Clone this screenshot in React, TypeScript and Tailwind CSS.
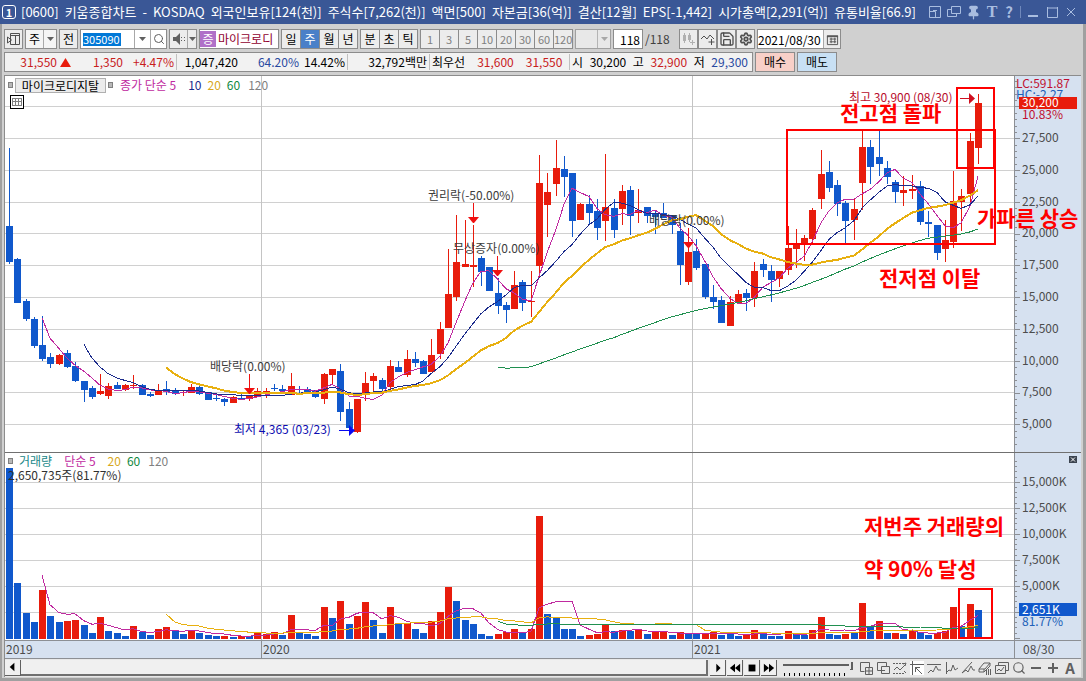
import React, { ReactNode } from 'react';
import { Search, Settings, Save, Pin } from 'lucide-react';

const RED = '#e81c0c';
const BLUE = '#1058cc';

// [up, high, body top, body bottom, low]
type Candle = [number, number, number, number, number];

const candles: Candle[] = [
  [0, 148, 226, 262, 264], [0, 258, 259, 303, 303], [0, 299, 301, 319, 321], [0, 317, 319, 346, 348],
  [0, 316, 345, 359, 361], [0, 353, 357, 364, 368], [1, 354, 355, 364, 365], [0, 350, 353, 367, 368],
  [0, 362, 366, 381, 382], [0, 381, 381, 390, 402], [0, 386, 388, 397, 399], [1, 374, 391, 394, 395],
  [1, 383, 386, 396, 399], [0, 382, 385, 389, 389], [1, 384, 385, 390, 391], [1, 375, 385, 386, 389],
  [0, 384, 385, 395, 395], [0, 392, 394, 396, 397], [1, 384, 390, 395, 395], [0, 381, 389, 392, 395],
  [0, 388, 390, 394, 395], [1, 391, 392, 393, 396], [1, 384, 387, 393, 393], [0, 385, 387, 394, 395],
  [0, 392, 392, 400, 400], [0, 395, 398, 399, 401], [0, 398, 399, 402, 406], [1, 396, 397, 403, 403],
  [0, 393, 398, 399, 399], [1, 395, 396, 399, 401], [1, 388, 391, 397, 397], [1, 388, 391, 392, 398],
  [0, 384, 388, 389, 391], [0, 385, 389, 391, 393], [1, 373, 386, 395, 395], [0, 386, 389, 390, 393],
  [0, 387, 389, 392, 392], [0, 390, 390, 397, 398], [1, 373, 374, 399, 404], [1, 369, 369, 375, 385],
  [0, 364, 371, 412, 421], [0, 402, 409, 428, 428], [1, 399, 399, 432, 433], [1, 372, 383, 393, 401],
  [1, 373, 376, 381, 392], [0, 378, 380, 389, 392], [1, 360, 366, 387, 391], [0, 361, 367, 372, 372],
  [1, 350, 359, 375, 377], [0, 352, 359, 363, 367], [0, 360, 361, 374, 374], [1, 339, 355, 372, 372],
  [1, 322, 329, 354, 359], [1, 249, 294, 328, 328], [1, 215, 262, 297, 301], [1, 220, 264, 267, 267],
  [1, 225, 265, 267, 287], [0, 256, 258, 272, 286], [0, 267, 267, 291, 291], [0, 278, 293, 306, 314],
  [0, 302, 305, 310, 323], [1, 271, 285, 309, 309], [0, 280, 282, 303, 311], [1, 271, 301, 302, 317],
  [1, 155, 183, 266, 278], [1, 173, 192, 205, 237], [1, 140, 168, 184, 196], [0, 156, 169, 177, 197],
  [0, 173, 173, 221, 237], [1, 203, 204, 220, 220], [0, 195, 204, 213, 224], [0, 199, 211, 228, 240],
  [1, 154, 207, 221, 241], [0, 199, 208, 230, 238], [1, 185, 191, 209, 225], [0, 186, 190, 216, 235],
  [1, 189, 210, 213, 223], [0, 207, 207, 216, 223], [0, 211, 213, 217, 234], [0, 203, 213, 218, 218],
  [0, 215, 215, 225, 234], [0, 223, 231, 265, 285], [1, 248, 252, 282, 285], [0, 239, 251, 268, 270],
  [0, 264, 264, 297, 299], [0, 285, 297, 302, 309], [0, 296, 300, 323, 323], [1, 296, 302, 326, 326],
  [1, 290, 294, 303, 303], [0, 289, 293, 298, 311], [1, 262, 271, 298, 307], [0, 259, 264, 270, 277],
  [0, 265, 271, 280, 302], [1, 271, 271, 279, 287], [1, 226, 248, 270, 275], [1, 229, 244, 249, 268],
  [1, 235, 238, 244, 261], [1, 208, 210, 239, 243], [1, 150, 174, 199, 209], [0, 161, 172, 188, 192],
  [0, 180, 185, 204, 216], [0, 201, 203, 221, 243], [1, 199, 209, 220, 240], [1, 130, 147, 183, 210],
  [0, 140, 147, 167, 184], [0, 130, 157, 164, 176], [0, 161, 168, 177, 184], [0, 180, 182, 192, 203],
  [1, 176, 190, 193, 206], [1, 175, 189, 191, 199], [0, 181, 186, 222, 225], [0, 211, 222, 224, 237],
  [0, 225, 225, 253, 260], [1, 220, 240, 249, 262], [1, 171, 201, 242, 248], [1, 189, 196, 202, 231],
  [1, 133, 141, 194, 203], [1, 94, 103, 148, 164],
];

// bar tops; r = rising volume, b = falling
const volumes =
  'b468 b583 b613 b622 r590 b616 b622 r621 r620 b625 b633 r617 b631 b633 b636 r626 b632 b635 r629 r627 b631 b634 r630 b633 b635 b636 r636 b637 r636 b636 r632 r634 r632 b635 r615 b633 b634 b636 r607 b618 r601 b624 r616 r602 b620 b633 r607 b624 r623 b629 b633 r621 r612 r587 b601 b620 b624 b634 b636 r634 r632 r629 b633 r629 r516 b614 b617 b629 b629 b636 r635 r634 r625 b631 r630 b631 r629 b634 r632 r632 b635 r632 b634 b634 r633 r632 b635 b634 b636 r635 r630 b634 b636 b636 r631 b634 b635 r630 r617 b634 b635 r634 b633 r603 b627 r621 b633 r633 b634 r631 b632 b635 r633 r631 r607 b626 r604 b610'
    .split(' ')
    .map((v) => ({ up: v[0] === 'r', top: Number(v.slice(1)) }));

const xOf = (i: number) => Math.round(9 + i * 8.282);
const closes = candles.map(([up, , top, bottom]) => (up ? top : bottom));
const tops = volumes.map((v) => v.top);

const average = (values: number[], period: number) => {
  const points: string[] = [];
  for (let i = period - 1; i < values.length; i++) {
    const part = values.slice(i - period + 1, i + 1);
    const mean = part.reduce((a, b) => a + b, 0) / period;
    points.push(`${xOf(i)},${mean.toFixed(1)}`);
  }
  return points.join(' ');
};

const priceTicks = ['27,500', '25,000', '22,500', '20,000', '17,500', '15,000', '12,500', '10,000', '7,500', '5,000'];
const volumeTicks = ['15,000K', '12,500K', '10,000K', '7,500K', '5,000K'];

const DownArrow = ({ x, y }: { x: number; y: number }) => (
  <g fill="#f01010" stroke="none">
    <rect x={x} y={y - 20} width="1" height="14" />
    <path d={`M${x - 5} ${y - 6}h11l-5 6h-1z`} />
  </g>
);

const PriceChart = () => (
  <svg viewBox="5 76 1076 376" className="block w-full overflow-visible text-[12px]" role="img" aria-label="주가 차트">
    <rect x="5" y="76" width="1009" height="376" fill="#fff" />
    <rect x="1014" y="76" width="67" height="376" fill="#d6e1f0" />
    <g shapeRendering="crispEdges">
      {[106, ...priceTicks.map((_, i) => Math.round(138 + i * 31.8))].map((y) => (
        <rect key={y} x="5" y={y} width="1009" height="1" fill="#d0d0d0" />
      ))}
      <rect x="261" y="76" width="1" height="376" fill="#c4c4c4" />
      <rect x="692" y="76" width="1" height="376" fill="#c4c4c4" />
      <rect x="1014" y="76" width="1" height="376" fill="#8c8f94" />
      {Array.from({ length: 58 }, (_, i) => (
        <rect key={i} x="1014" y={Math.round(81 + i * 6.36)} width={i % 5 === 4 ? 6 : 3} height="1" fill="#8c8f94" />
      ))}
      {candles.map(([up, high, top, bottom, low], i) => (
        <g key={i} fill={up ? RED : BLUE}>
          <rect x={xOf(i)} y={high} width="1" height={low - high} />
          <rect x={xOf(i) - 3} y={top} width="7" height={bottom - top} />
        </g>
      ))}
      <g fill="none">
        <polyline points={average(closes, 5)} stroke="#c02aa0" />
        <polyline points={average(closes, 10)} stroke="#1c2c8c" />
        <polyline points={average(closes, 20)} stroke="#e8b010" strokeWidth="2" />
        <polyline points={average(closes, 60)} stroke="#209050" />
      </g>
    </g>
    <g fill="#3c3c3c">
      <text x="210" y="371">배당락(0.00%)</text>
      <text x="428" y="200">권리락(-50.00%)</text>
      <text x="453" y="253">무상증자(0.00%)</text>
      <text x="649" y="225">배당락(0.00%)</text>
    </g>
    <DownArrow x={249} y={394} />
    <DownArrow x={473} y={223} />
    <DownArrow x={497} y={276} />
    <DownArrow x={688} y={248} />
    <text x="234" y="434" fill="#0c0cb0">최저 4,365 (03/23)</text>
    <path d="M339 430h10v-5l6 5.500-6 5.500v-5h-10z" fill="#0808f0" />
    <text x="849" y="102" fill="#b80c2c">최고 30,900 (08/30)</text>
    <path d="M960 98h9v-5l6 5.500-6 5.500v-5h-9z" fill="#d01020" />
    <g fill="#4c4c4c">
      {priceTicks.map((label, i) => (
        <text key={label} x="1022" y={Math.round(142 + i * 31.8)}>{label}</text>
      ))}
    </g>
    <text x="1016" y="88" fill="#c01030">LC:591.87</text>
    <text x="1016" y="99" fill="#2060b8">HC:-2.27</text>
    <rect x="1019" y="97" width="58" height="12" fill={RED} />
    <text x="1022" y="107" fill="#fff">30,200</text>
    <text x="1022" y="119" fill="#c01030">10.83%</text>
    <g fill="none" stroke="#f00" strokeWidth="2" shapeRendering="crispEdges">
      <rect x="787" y="130" width="208" height="114" />
      <rect x="957" y="88" width="37" height="80" />
    </g>
    <g fill="#f00" className="text-[21px] font-bold">
      <text x="840" y="121">전고점 돌파</text>
      <text x="879" y="286">전저점 이탈</text>
      <text x="977" y="226">가파른 상승</text>
    </g>
  </svg>
);

const VolumeChart = () => (
  <svg viewBox="5 453 1076 187" className="block w-full text-[12px]" role="img" aria-label="거래량 차트">
    <rect x="5" y="453" width="1009" height="187" fill="#fff" />
    <rect x="1014" y="453" width="67" height="187" fill="#d6e1f0" />
    <g shapeRendering="crispEdges">
      {[482, 508, 534, 560, 586, 612].map((y) => (
        <rect key={y} x="5" y={y} width="1009" height="1" fill="#d0d0d0" />
      ))}
      <rect x="261" y="453" width="1" height="187" fill="#c4c4c4" />
      <rect x="692" y="453" width="1" height="187" fill="#c4c4c4" />
      <rect x="1014" y="453" width="1" height="187" fill="#8c8f94" />
      {Array.from({ length: 35 }, (_, i) => (
        <rect key={i} x="1014" y={Math.round(461 + i * 5.2)} width={i % 5 === 4 ? 6 : 3} height="1" fill="#8c8f94" />
      ))}
      {volumes.map((v, i) => (
        <rect key={i} x={xOf(i) - 3} y={v.top} width="7" height={639 - v.top} fill={v.up ? RED : BLUE} />
      ))}
      <g fill="none">
        <polyline points={average(tops, 5)} stroke="#c02aa0" />
        <polyline points={average(tops, 20)} stroke="#e8b010" />
        <polyline points={average(tops, 60)} stroke="#209050" />
      </g>
      <rect x="959" y="589" width="33" height="49" fill="none" stroke="#f00" strokeWidth="2" />
      <rect x="1069" y="456" width="8" height="7" fill="#3c4450" />
    </g>
    <path d="M1071 457.500l4 4m0-4l-4 4" stroke="#fff" />
    <g fill="#4c4c4c">
      {volumeTicks.map((label, i) => (
        <text key={label} x="1022" y={486 + i * 26}>{label}</text>
      ))}
    </g>
    <rect x="1019" y="603" width="58" height="13" fill={BLUE} />
    <text x="1022" y="614" fill="#fff">2,651K</text>
    <text x="1022" y="626" fill="#2060b8">81.77%</text>
    <g fill="#f00" className="text-[21px] font-bold">
      <text x="864" y="534">저번주 거래량의</text>
      <text x="864" y="577">약 90% 달성</text>
    </g>
  </svg>
);

const Glyph = ({ d, fill = false, size = 14 }: { d: string; fill?: boolean; size?: number }) => (
  <svg width={size} height={size} viewBox="0 0 14 14" fill={fill ? 'currentColor' : 'none'} stroke={fill ? 'none' : 'currentColor'}>
    <path d={d} />
  </svg>
);

const Arrow = () => (
  <svg width="7" height="4" viewBox="0 0 7 4" className="fill-current">
    <path d="M0 0h7L3.500 4z" />
  </svg>
);

const Tool = ({ label, children, className = 'text-[#505050]' }: { label: string; children: ReactNode; className?: string }) => (
  <button
    aria-label={label}
    className={`flex h-5 w-[19px] shrink-0 items-center justify-center border border-[#8c8c8c] bg-[#ececec] ${className}`}
  >
    {children}
  </button>
);

const Segment = ({ items, active, muted = false }: { items: string[]; active?: string; muted?: boolean }) => (
  <div className="flex shrink-0 border-l border-[#8c8c8c]">
    {items.map((item) => (
      <button
        key={item}
        className={`h-5 w-[19px] border-y border-r border-[#8c8c8c] text-center ${
          item === active ? 'bg-[#4a80c8] text-white' : muted ? 'bg-[#ececec] text-[11px] text-[#808080]' : 'bg-[#ececec]'
        }`}
      >
        {item}
      </button>
    ))}
  </div>
);

const titleParts = [
  '[0600]', '키움종합차트', '-', 'KOSDAQ', '외국인보유[124(천)]', '주식수[7,262(천)]', '액면[500]', '자본금[36(억)]',
  '결산[12월]', 'EPS[-1,442]', '시가총액[2,291(억)]', '유통비율[66.9]',
];

const TitleBar = () => (
  <header className="flex h-6 items-center bg-[#3a5796] pl-[2px] pr-2 text-white">
    <span className="mr-[5px] flex h-[14px] w-[14px] items-center justify-center rounded-[3px] border border-white text-[11px] font-bold">1</span>
    <h1 className="flex gap-[6px] whitespace-nowrap text-[13px]">
      {titleParts.map((part) => (
        <span key={part}>{part}</span>
      ))}
    </h1>
    <div className="ml-auto flex items-center gap-[5px] text-[#a9bde0]">
      <button aria-label="축소"><Glyph d="M1.500 12.500v-11h11v11zM1.500 6.500h6v6M9 5.500H5" /></button>
      <button aria-label="복제"><Glyph d="M4.500 1.500h9v7h-9zM4.500 4.500h-4v7h9v-3" /></button>
      <button aria-label="고정"><Pin size={15} fill="currentColor" /></button>
      <button className="w-3 font-['Liberation_Serif',serif] text-[16px] font-bold">T</button>
      <button className="w-3 text-[15px] font-bold">?</button>
      <span className="h-3 w-px bg-[#6f88bb]" />
      <button aria-label="최소화"><Glyph d="M2 10h10v2H2z" fill /></button>
      <button aria-label="최대화"><Glyph d="M2.500 2v10.500h10V2M2 3h11" /></button>
      <button aria-label="닫기"><Glyph d="M3 3l8 8M11 3l-8 8" /></button>
    </div>
  </header>
);

const Toolbar = () => (
  <div className="flex h-7 items-center gap-[2px] pt-[2px]">
    <Tool label="패널"><Glyph d="M3.500 1.500h9v11h-9zM3 3.500h10M8.500 4v8M0.500 5l4 3-4 3z" /></Tool>
    <label className="relative flex h-5 w-8 shrink-0 items-center border border-[#8c8c8c] bg-[#f4f4f4]">
      <select aria-label="종목 구분" className="h-full w-full appearance-none pl-[3px] outline-none"><option>주</option></select>
      <span className="pointer-events-none absolute right-0 flex h-full w-[13px] items-center justify-center border-l border-[#a8a8a8] text-[#606060]"><Arrow /></span>
    </label>
    <Tool label="전일" className="text-black">전</Tool>
    <div className="flex h-5 w-[87px] shrink-0 items-center border border-[#8c8c8c] bg-white text-[#606060]">
      <input aria-label="종목코드" defaultValue="305090" className="ml-[2px] h-[13px] w-[38px] bg-[#0078d7] text-[11px] text-white outline-none" />
      <button aria-label="목록" className="ml-auto flex h-full w-4 items-center justify-center border-l border-[#a8a8a8]"><Arrow /></button>
      <button aria-label="검색" className="flex h-full w-4 items-center justify-center border-l border-[#a8a8a8]"><Search size={12} /></button>
    </div>
    <div className="flex h-5 w-7 shrink-0 items-center border border-[#8c8c8c] bg-[#ececec] text-[#606060]">
      <button aria-label="소리" className="flex w-[17px] justify-center"><Glyph d="M1 5h3l4-4v12l-4-4H1zM9 5h1v1H9zM9 8h1v1H9zM12 5h1v1h-1zM12 8h1v1h-1z" fill /></button>
      <button aria-label="소리 설정" className="flex h-full flex-1 items-center justify-center border-l border-[#a8a8a8]"><Arrow /></button>
    </div>
    <div className="flex h-5 w-20 shrink-0 items-center overflow-hidden whitespace-nowrap border border-[#8c8c8c] bg-white text-[#900030]">
      <span className="mr-[2px] h-4 w-4 shrink-0 bg-[#b070c8] text-center leading-4 text-white">증</span>
      마이크로디
    </div>
    <Segment items={['일', '주', '월', '년']} active="주" />
    <Segment items={['분', '초', '틱']} />
    <Segment items={['1', '3', '5', '10', '20', '30', '60', '120']} muted />
    <label className="relative flex h-5 w-9 shrink-0 items-center border border-[#a0a0a0] bg-[#e8e8e8]">
      <select aria-label="주기" className="h-full w-full appearance-none outline-none" disabled><option></option></select>
      <span className="absolute right-0 flex h-full w-[13px] items-center justify-center border-l border-[#b4b4b4] text-[#a8a8a8]"><Arrow /></span>
    </label>
    <input aria-label="봉 개수" defaultValue="118" className="h-5 w-[30px] shrink-0 border border-[#8c8c8c] bg-white pr-[2px] text-right outline-none" />
    <span className="w-8 text-[#404040]">/118</span>
    <div className="flex shrink-0">
      <Tool label="봉 추가" className="text-[#b0b0b0]"><Glyph d="M1 3h3v6H1zM2 1h1v10H2zM6 3h3v5H6zM7 1h1v9H7zM10 8h1v2h2v1h-2v2h-1v-2H8v-1h2z" fill /></Tool>
      <Tool label="지표 추가"><Glyph d="M0 7l3-3 3 3 3-4 4 4M10.500 7v6M7.500 10h6" /></Tool>
      <Tool label="저장"><Save size={16} /></Tool>
      <Tool label="설정"><Settings size={14} strokeWidth={3} /></Tool>
    </div>
    <div className="flex h-5 w-[84px] shrink-0 items-center border border-[#8c8c8c] bg-white">
      <input aria-label="날짜" defaultValue="2021/08/30" className="h-full w-[65px] text-[12px] outline-none" />
      <button aria-label="달력" className="flex h-full flex-1 items-center justify-center border-l border-[#a8a8a8] bg-[#ececec] text-[#505050]">
        <Glyph d="M1.500 3.500h11v9h-11zM1 3h12M1 4h12M4 6.500h7M4 9.500h7M5.500 5v6M9.500 5v6" size={13} />
      </button>
    </div>
  </div>
);

const QuoteRow = () => (
  <div className="flex h-5 items-center gap-[2px] whitespace-nowrap">
    <div className="flex h-5 items-center border border-[#8c8c8c] bg-[#f2f2f2]">
      <div className="flex w-[172px] justify-end gap-[10px] border-r border-[#c0c0c0] pr-[2px] text-[#c8201c]">
        <span className="flex items-center gap-[3px]">
          31,550
          <svg width="11" height="9" viewBox="0 0 11 9" fill={RED}><path d="M5.500 0L11 9H0z" /></svg>
        </span>
        <span className="w-[42px] text-right">1,350</span>
        <span>+4.47%</span>
      </div>
      <div className="flex w-[171px] justify-end gap-[5px] border-r border-[#c0c0c0] pr-[2px]">
        <span className="mr-[10px]">1,047,420</span>
        <span className="w-[46px] text-right text-[#2848a0]">64.20%</span>
        <span>14.42%</span>
      </div>
      <div className="w-[82px] border-r border-[#c0c0c0] pr-[2px] text-right">32,792백만</div>
      <div className="flex w-[140px] gap-3 border-r border-[#c0c0c0] pl-[2px] text-[#c8201c]">
        <span className="text-black">최우선</span>
        <span>31,600</span>
        <span>31,550</span>
      </div>
      <div className="flex w-[182px] justify-between pl-[2px] pr-1">
        <span>시</span>
        <span>30,200</span>
        <span>고</span>
        <span className="text-[#c8201c]">32,900</span>
        <span>저</span>
        <span className="text-[#2848a0]">29,300</span>
      </div>
    </div>
    <button className="h-5 w-10 border border-[#8c8c8c] bg-[#f8d0c8]">매수</button>
    <button className="h-5 w-10 border border-[#8c8c8c] bg-[#c8e0f4]">매도</button>
  </div>
);

const Marker = () => <span className="h-[6px] w-[5px] border border-[#808080] bg-[#b8b8b8]" />;

const drawTools = [
  { label: '추가', d: 'M1.500 1.500h9v5M1.500 1.500v9h4M6.500 6.500h7v7h-7zM10 7v6M7 10h6' },
  { label: '겹치기', d: 'M9 9.500H1.500v-8h9V5M5.500 5.500h8v7h-8z' },
  { label: '범위', d: 'M0 2.500h2m1 0h2m1 0h2m1 0h2M0 12.500h2m1 0h2m1 0h2m1 0h2M1 9l3-3 3 3 5-5M10 3l3-1-1 3M11 10l2 2' },
  { label: '커서', d: 'M2.500 0v14M0 3.500h14M5 6l7 7M5.500 11V6.500H10' },
  { label: '수평선', d: 'M0 3.500h14M1 12l3-3 2 2 3-6 2 4h3' },
  { label: '수직선', d: 'M2.500 1v12M2 12l3-3 2 1 2-6 2 5 3-2' },
  { label: '추세선', d: 'M1 12L11 1M1 12l4-3 2 2 3-6 2 4h2' },
  { label: '지우기', d: 'M1 8l5-6h6l-5 6zM1 8v3h5V8M6 11l6-6V2M8.500 9v5M10.500 8v6M12.500 8v6' },
  { label: '저장', d: 'M3.500 4V1.500h10v8H11M0.500 4.500h10v8h-10zM2 10l2-2 2 2 3-4' },
];

const BottomBar = () => (
  <div className="flex h-[18px] items-center bg-[#e8e8e8] pr-1">
    <button aria-label="이전" className="flex h-4 w-4 items-center justify-center border-b border-r border-[#606060] bg-[#f0f0f0]"><Glyph d="M9 2v9L4 6.500z" fill size={13} /></button>
    <div className="h-4 flex-1 border-b-2 border-r-2 border-[#707070] bg-[#f0f0f0]" />
    <div className="ml-[2px] flex gap-px">
      {[
        ['재생', 'M5 2l5 5-5 5z'],
        ['뒤로', 'M7 2v10L1 7zM13 2v10L7 7z'],
        ['정지', 'M3 3h8v8H3z'],
        ['앞으로', 'M1 2l6 5-6 5zM7 2l6 5-6 5z'],
      ].map(([label, d]) => (
        <button key={label} aria-label={label} className="flex h-4 w-4 items-center justify-center border-b border-r border-[#606060] bg-[#f0f0f0]">
          <Glyph d={d} fill size={12} />
        </button>
      ))}
    </div>
    <label className="relative ml-[6px] flex h-4 w-[72px] items-center">
      <input type="range" aria-label="확대 비율" defaultValue="100" className="absolute inset-0 h-full w-full opacity-0" />
      <svg viewBox="0 0 72 16" className="block h-4 w-full" fill="#606060" shapeRendering="crispEdges">
        <rect x="0" y="4" width="66" height="2" />
        <path d="M68 2h2v8h-3v-1h1z" />
        {Array.from({ length: 13 }, (_, i) => (
          <rect key={i} x={1 + i * 5} y="13" width="1" height="3" fill="#000" />
        ))}
      </svg>
    </label>
    <div className="ml-1 flex items-center gap-[3px] text-[#606060]">
      {drawTools.map((tool) => (
        <button key={tool.label} aria-label={tool.label} className={tool.label === '커서' ? 'bg-white' : ''}>
          <Glyph d={tool.d} />
        </button>
      ))}
      <button aria-label="돋보기"><Search size={14} /></button>
      <button aria-label="축소"><Glyph d="M2 6h10v2H2z" fill /></button>
      <button aria-label="확대"><Glyph d="M2 6h4V2h2v4h4v2H8v4H6V8H2z" fill /></button>
      <button className="w-[14px] text-[15px] font-bold">A</button>
    </div>
  </div>
);

const App: React.FC = () => {
  return (
    <div className="min-h-screen bg-[#a0a0a0] font-['Noto_Sans_CJK_KR',sans-serif] text-[12px] leading-4 text-black">
      <TitleBar />
      <div className="mr-[3px] border-l-2 border-[#a0a0a0] bg-[#d0d0d0] pb-px pl-[2px]">
        <Toolbar />
        <QuoteRow />
        <main className="mr-[2px] mt-[3px] border-l border-t border-[#8c8c8c]">
          <section className="relative">
            <PriceChart />
            <div className="absolute left-[3px] top-px flex items-center whitespace-nowrap">
              <Marker />
              <span className="mx-[2px] h-[15px] w-[91px] border border-[#b0b0b0] bg-[#ececec] text-center leading-[13px]">마이크로디지탈</span>
              <Marker />
              <span className="ml-[7px] text-[#c02aa0]">종가 단순 5</span>
              <span className="ml-3 text-[#1c2c8c]">10</span>
              <span className="ml-[6px] text-[#d8a820]">20</span>
              <span className="ml-[6px] text-[#108840]">60</span>
              <span className="ml-2 text-[#808080]">120</span>
            </div>
            <button aria-label="표 보기" className="absolute left-[5px] top-[19px] bg-white">
              <svg width="14" height="14" viewBox="0 0 14 14" fill="none" shapeRendering="crispEdges">
                <rect x="0.500" y="0.500" width="13" height="13" stroke="#000" />
                <path d="M2.500 3.500h9v7h-9zM2 6.500h9M5.500 4v7M8.500 4v7" stroke="#808080" />
              </svg>
            </button>
          </section>
          <section className="relative border-t border-[#707070]">
            <VolumeChart />
            <div className="absolute left-[3px] top-0 whitespace-nowrap">
              <div className="flex items-center">
                <Marker />
                <span className="ml-[6px] text-[#208888]">거래량</span>
                <span className="ml-3 text-[#c02aa0]">단순 5</span>
                <span className="ml-3 text-[#d8a820]">20</span>
                <span className="ml-[6px] text-[#108840]">60</span>
                <span className="ml-2 text-[#808080]">120</span>
              </div>
              <div className="-mt-[2px] text-[#303030]">2,650,735주(81.77%)</div>
            </div>
          </section>
          <div className="flex h-[19px] border-y border-[#8c8f94] bg-[#d6e1f0] text-[#4c4c4c]">
            <span className="w-[256px] pl-px">2019</span>
            <span className="w-[431px] border-l border-[#8c8f94] pl-px">2020</span>
            <span className="flex-1 border-l border-[#8c8f94] pl-px">2021</span>
            <span className="w-[67px] border-l border-[#8c8f94] pl-2">08/30</span>
          </div>
          <BottomBar />
        </main>
      </div>
    </div>
  );
};

export default App;
